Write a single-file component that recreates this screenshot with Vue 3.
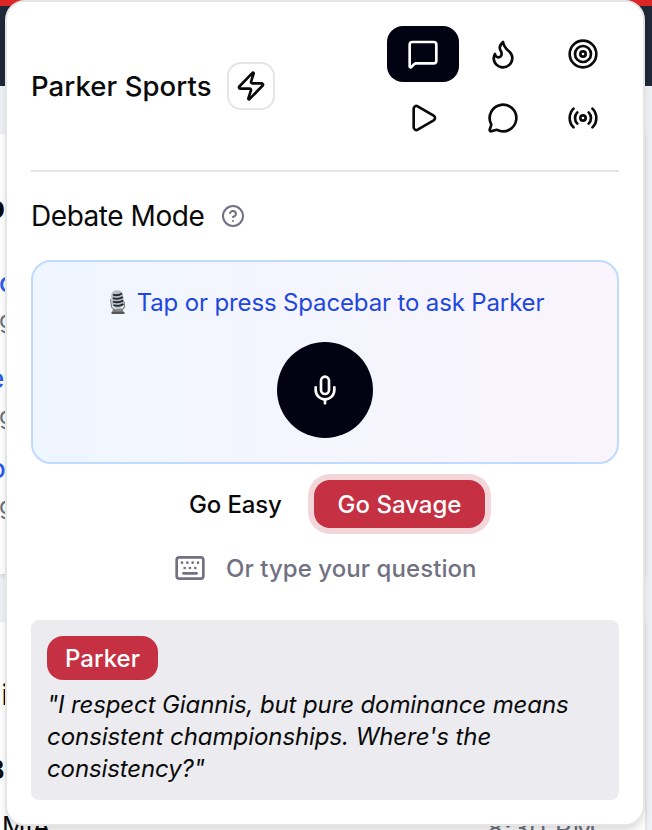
<script setup>
const tabs = [
  {
    name: 'message-square',
    active: true,
    paths: ['M22 17a2 2 0 0 1-2 2H6.828a2 2 0 0 0-1.414.586l-2.202 2.202A.71.71 0 0 1 2 21.286V5a2 2 0 0 1 2-2h16a2 2 0 0 1 2 2z'],
    circles: []
  },
  {
    name: 'flame',
    paths: ['M8.5 14.5A2.5 2.5 0 0 0 11 12c0-1.38-.5-2-1-3-1.072-2.143-.224-4.054 2-6 .5 2.5 2 4.9 4 6.5 2 1.6 3 3.5 3 5.5a7 7 0 1 1-14 0c0-1.153.433-2.294 1-3a2.5 2.5 0 0 0 2.5 2.5z'],
    circles: []
  },
  { name: 'target', paths: [], circles: [10, 6, 2] },
  {
    name: 'play',
    paths: ['M5 5a2 2 0 0 1 3.008-1.728l11.997 6.998a2 2 0 0 1 .003 3.458l-12 7A2 2 0 0 1 5 19z'],
    circles: []
  },
  {
    name: 'message-circle',
    paths: ['M2.992 16.342a2 2 0 0 1 .094 1.167l-1.065 3.29a1 1 0 0 0 1.236 1.168l3.413-.998a2 2 0 0 1 1.099.092 10 10 0 1 0-4.777-4.719'],
    circles: []
  },
  {
    name: 'radio',
    paths: [
      'M16.247 7.761a6 6 0 0 1 0 8.478',
      'M19.075 4.933a10 10 0 0 1 0 14.134',
      'M4.925 19.067a10 10 0 0 1 0-14.134',
      'M7.753 16.239a6 6 0 0 1 0-8.478'
    ],
    circles: [2]
  }
]
</script>

<template>
  <div class="page">
    <div class="backdrop">
      <div class="strip"></div>
      <div class="navbar"></div>
      <section class="sheet first">
        <p class="heading">p</p>
        <p class="link l1">c</p>
        <p class="meta m1">g</p>
        <p class="link l2">e</p>
        <p class="meta m2">g</p>
        <p class="link l3">o</p>
        <p class="meta m3">g</p>
      </section>
      <section class="sheet second">
        <p class="team-a">ni</p>
        <p class="team-b">B</p>
        <div class="game"><span>MIA</span><span class="time">8:30 PM</span></div>
      </section>
    </div>

    <main class="panel">
      <header class="header">
        <div class="brand">
          <h1>Parker Sports</h1>
          <button class="zap" aria-label="Quick actions">
            <svg class="icon" viewBox="0 0 24 24"><path d="M4 14a1 1 0 0 1-.78-1.63l9.9-10.2a.5.5 0 0 1 .86.46l-1.92 6.02A1 1 0 0 0 13 10h7a1 1 0 0 1 .78 1.63l-9.9 10.2a.5.5 0 0 1-.86-.46l1.92-6.02A1 1 0 0 0 11 14z" /></svg>
          </button>
        </div>
        <nav class="tabs">
          <button v-for="tab in tabs" :key="tab.name" :aria-label="tab.name" class="tab" :class="{ active: tab.active }">
            <svg class="icon" viewBox="0 0 24 24">
              <path v-for="d in tab.paths" :key="d" :d="d" />
              <circle v-for="r in tab.circles" :key="r" cx="12" cy="12" :r="r" />
            </svg>
          </button>
        </nav>
      </header>

      <div class="mode">
        <h2>Debate Mode</h2>
        <svg class="icon help" viewBox="0 0 24 24"><circle cx="12" cy="12" r="10" /><path d="M9.09 9a3 3 0 0 1 5.83 1c0 2-3 3-3 3" /><path d="M12 17h.01" /></svg>
      </div>

      <section class="ask">
        <div class="prompt">
          <svg class="studio-mic" viewBox="0 0 20 26">
            <path d="M5 20l9-.5 2 4H4z" fill="#777" />
            <path d="M2.500 10l1.200 8.500 3.500 2.500h7l2.300-3-.2-5" fill="none" stroke="#8a8a8a" stroke-width="1.300" />
            <rect x="3.500" y="1.200" width="12" height="18" rx="5.500" fill="#b9bec4" transform="rotate(-7 9.500 10)" />
            <path d="M5 5.500c3 1.500 6 .8 9-1M4.800 9c3.500 1.500 7 .8 10-.8M5 12.500c3.500 1.500 7 .8 10.300-.8M5.500 16c3.500 1.500 7 .8 10-.8" fill="none" stroke="#202733" stroke-width="1.900" />
            <path d="M3.500 24h13" stroke="#4a4a4a" stroke-width="1.800" />
          </svg>
          <span>Tap or press Spacebar to ask Parker</span>
        </div>
        <button class="talk" aria-label="Talk">
          <svg class="icon" viewBox="0 0 24 24"><path d="M12 19v3" /><path d="M19 10v2a7 7 0 0 1-14 0v-2" /><rect x="9" y="2" width="6" height="13" rx="3" /></svg>
        </button>
      </section>

      <div class="tone">
        <button class="easy">Go Easy</button>
        <button class="savage">Go Savage</button>
      </div>

      <div class="type">
        <svg class="icon" viewBox="0 0 24 24"><path d="M10 8h.01M12 12h.01M14 8h.01M16 12h.01M18 8h.01M6 8h.01M7 16h10M8 12h.01" /><rect width="20" height="16" x="2" y="4" rx="2" /></svg>
        <span>Or type your question</span>
      </div>

      <article class="reply">
        <span class="badge">Parker</span>
        <p>"I respect Giannis, but pure dominance means<br /><span class="wide">consistent championships. Where's the</span><br />consistency?"</p>
      </article>
    </main>
  </div>
</template>

<style>
body { overflow: hidden; }
</style>

<style scoped>
* { box-sizing: border-box; margin: 0; }
.page {
  position: relative;
  width: 652px;
  height: 830px;
  overflow: hidden;
  font-family: Inter, sans-serif;
  color: #0a0a0a;
}
button { border: 0; padding: 0; background: none; font: inherit; color: inherit; }
.icon {
  display: block;
  flex: none;
  width: 32px;
  height: 32px;
  fill: none;
  stroke: currentColor;
  stroke-width: 2;
  stroke-linecap: round;
  stroke-linejoin: round;
}

.backdrop { height: 830px; background: #f0f1f4; overflow: hidden; }
.strip { height: 6px; background: #dc2626; }
.navbar { height: 80px; background: #1f2937; }
.sheet {
  width: 645px;
  background: #fff;
  white-space: nowrap;
  box-shadow: 0 2px 4px rgba(0, 0, 0, 0.12);
}
.first { height: 440px; margin-top: 48px; padding-top: 55px; }
.second { height: 260px; margin-top: 48px; padding-top: 57px; }
.heading { height: 81px; margin-left: -14px; font-size: 30px; line-height: 36px; font-weight: 700; }
.link { height: 38px; color: #2b5cf0; font-size: 26px; line-height: 26px; font-weight: 500; }
.meta { height: 58px; color: #6b7280; font-size: 24px; line-height: 24px; margin-left: -1px; }
.l1 { margin-left: -1px; }
.l2 { margin-left: -11px; }
.l3 { margin-left: -10px; }
.m2 { height: 52px; }
.team-a { height: 75px; margin-left: -15px; font-size: 28px; line-height: 32px; }
.team-b { height: 56px; margin-left: -12px; font-size: 25px; line-height: 32px; font-weight: 600; }
.game { display: flex; justify-content: space-between; padding: 0 48px 0 2px; font-size: 26px; line-height: 32px; }
.time { padding-top: 3px; color: #6b7280; letter-spacing: 0.9px; }

.panel {
  position: absolute;
  left: 5px;
  top: 0;
  width: 640px;
  height: 826px;
  padding: 24px;
  display: flex;
  flex-direction: column;
  background: #fff;
  border: 2px solid #e5e5e5;
  border-radius: 20px;
  box-shadow: 0 8px 12px -2px rgba(0, 0, 0, 0.1), 0 4px 8px -4px rgba(0, 0, 0, 0.1);
}
.header {
  display: flex;
  justify-content: space-between;
  align-items: center;
  height: 146px;
  padding-bottom: 24px;
  border-bottom: 2px solid #e5e5e5;
}
.brand { display: flex; align-items: center; gap: 16px; }
h1 { width: 180px; font-size: 27.500px; line-height: 40px; font-weight: 500; letter-spacing: 0.08px; white-space: nowrap; }
.zap {
  display: grid;
  place-items: center;
  width: 48px;
  height: 48px;
  border: 2px solid #e5e5e5;
  border-radius: 14px;
}
.tabs { display: grid; grid-template-columns: repeat(3, 72px); grid-auto-rows: 56px; gap: 8px; }
.tab { display: grid; place-items: center; border-radius: 16px; }
.active { background: #030213; color: #fff; }
.mode { display: flex; align-items: center; gap: 16px; height: 40px; margin-top: 24px; }
h2 { width: 174px; font-size: 28px; line-height: 40px; font-weight: 400; letter-spacing: -0.45px; white-space: nowrap; }
.help { width: 24px; height: 24px; color: #717182; }

.ask {
  display: flex;
  flex-direction: column;
  align-items: center;
  gap: 24px;
  height: 204px;
  margin-top: 24px;
  padding-top: 24px;
  background: linear-gradient(90deg, #eff6ff, #f4f5fe 45%, #f9f4fe);
  border: 2px solid #bedbff;
  border-radius: 20px;
}
.prompt { display: flex; align-items: center; gap: 9px; height: 32px; padding-left: 2px; color: #1f47e0; font-size: 24px; letter-spacing: -0.14px; white-space: nowrap; }
.studio-mic { width: 20px; height: 26px; margin-top: -1px; }
.talk { display: grid; place-items: center; width: 96px; height: 96px; border-radius: 50%; background: #030213; color: #fff; }

.tone { display: flex; align-items: center; height: 48px; margin-top: 16px; padding-left: 158px; gap: 32px; font-size: 24px; font-weight: 500; white-space: nowrap; }
.easy { width: 93px; text-align: left; letter-spacing: -0.15px; }
.savage { width: 171px; height: 48px; border-radius: 16px; background: #c53043; color: #fff; box-shadow: 0 0 0 6px #f3d6da; }
.type { display: flex; align-items: center; gap: 20px; height: 32px; margin-top: 24px; padding-left: 143px; color: #717182; font-size: 24px; font-weight: 500; letter-spacing: 0.06px; white-space: nowrap; }
.reply { height: 180px; margin-top: 36px; padding: 16px; background: #ececf0; border-radius: 8px; }
.badge { display: block; width: 111px; height: 44px; border-radius: 16px; background: #c53043; color: #fff; font-size: 24px; line-height: 45px; font-weight: 500; text-align: center; }
.reply p { margin-top: 9px; font-size: 24px; line-height: 32px; font-style: italic; letter-spacing: -0.12px; white-space: nowrap; }
.wide { letter-spacing: -0.06px; }
</style>
